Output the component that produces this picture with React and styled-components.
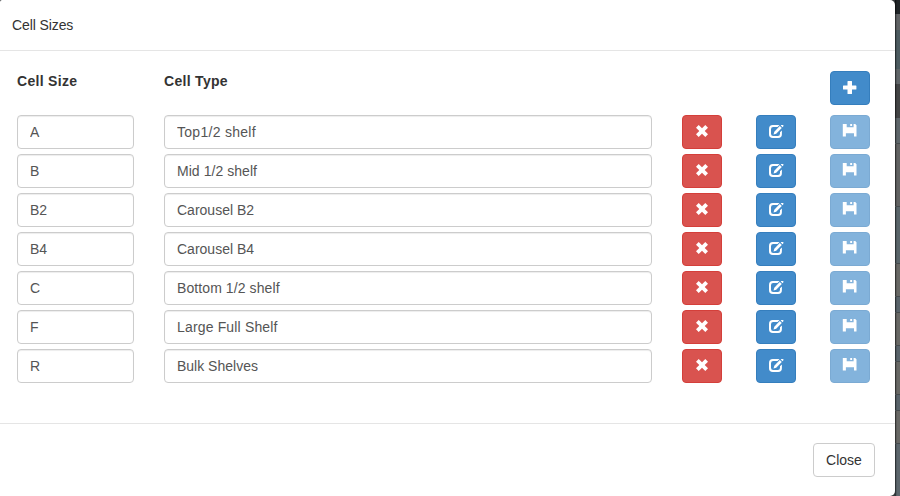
import React from 'react';
import styled, { createGlobalStyle } from 'styled-components';

const GlobalStyle = createGlobalStyle`
  * { box-sizing: border-box; }
  body {
    margin: 0;
    overflow: hidden;
    font: 14px/20px "Liberation Sans", Arial, sans-serif;
    color: #333;
  }
`;

const Page = styled.div`
  display: grid;
  grid-template-columns: 895px 5px;
  height: 496px;
  overflow: hidden;
  background: #34383a;
`;

const Dialog = styled.main`
  display: flex;
  flex-direction: column;
  height: 496px;
  background: #fff;
  border-radius: 2px 5px 5px 0;
`;

const Backdrop = styled.div`
  display: flex;
  flex-direction: column;
`;

const Band = styled.div`
  height: ${(p) => p.$height}px;
  background: linear-gradient(90deg, rgba(0, 0, 0, 0.5) 0 1px, rgba(0, 0, 0, 0.12) 1px 2px, transparent 2px) ${(p) => p.$color};
  border-bottom: ${(p) => (p.$line ? '1px solid #464b4d' : '0')};
`;

const Header = styled.header`
  height: 51px;
  padding: 15px 12px;
  border-bottom: 1px solid #e5e5e5;
  letter-spacing: -0.1px;
`;

const Body = styled.section`
  height: 372px;
  padding: 20px 25px 0 17px;
`;

const Row = styled.div`
  display: grid;
  grid-template-columns: 117px 488px 40px 44px 44px;
  column-gap: 30px;
  height: 34px;
  margin-bottom: 5px;
`;

const HeadRow = styled(Row)`
  margin-bottom: 10px;
`;

const Label = styled.span`
  font-weight: 700;
  letter-spacing: 0.3px;
`;

const Field = styled.input`
  width: 100%;
  height: 34px;
  padding: 6px 12px;
  border: 1px solid #ccc;
  border-radius: 4px;
  background: #fff;
  color: #555;
  font: inherit;
  letter-spacing: ${(p) => p.$tracking || 0}px;
  outline: none;
  box-shadow: inset 0 1px 1px rgba(0, 0, 0, 0.075);
`;

const tones = {
  danger: ['#d9534f', '#d43f3a'],
  primary: ['#428bca', '#357ebd'],
};

const IconButton = styled.button`
  display: flex;
  align-items: flex-start;
  justify-content: center;
  justify-self: end;
  width: 40px;
  height: 34px;
  padding: 8px 0 0;
  color: #fff;
  background: ${(p) => tones[p.$tone][0]};
  border: 1px solid ${(p) => tones[p.$tone][1]};
  border-radius: 4px;
  opacity: ${(p) => (p.disabled ? 0.65 : 1)};
`;

const AddButton = styled(IconButton)`
  grid-column: 5;
`;

const Glyph = styled.svg`
  display: block;
  width: 16px;
  height: 16px;
  fill: currentColor;
`;

const Footer = styled.footer`
  display: flex;
  justify-content: flex-end;
  align-items: flex-start;
  flex: 1;
  padding: 19px 20px;
  border-top: 1px solid #e5e5e5;
`;

const CloseButton = styled.button`
  width: 62px;
  height: 34px;
  padding: 0;
  border: 1px solid #ccc;
  border-radius: 4px;
  background: #fff;
  color: #333;
  font: inherit;
`;

const PlusIcon = () => (
  <Glyph viewBox="0 0 16 16">
    <path d="M6 1h3.500q.5 0 .5.500V5.500h3.900q.5 0 .5.500v3q0 .5-.5.500H10v4q0 .5-.5.500H6q-.5 0-.5-.5v-4H1.500Q1 9.500 1 9V6q0-.5.5-.5h4v-4Q5.500 1 6 1Z" />
  </Glyph>
);

const RemoveIcon = () => (
  <Glyph viewBox="0 0 16 16">
    <path d="M4.700 1 8 4.300 11.300 1 14 3.700 10.700 7 14 10.300 11.300 13 8 9.700 4.700 13 2 10.300 5.300 7 2 3.700Z" />
  </Glyph>
);

const EditIcon = () => (
  <Glyph viewBox="0 0 16 16">
    <path d="M4.800 1H11.500L9.600 3H5.200Q3 3 3 5.200v4.600Q3 12 5.200 12h4.600Q12 12 12 9.800V8.300l1.900-1.900v3.800Q13.900 14 10.100 14H4.900Q1 14 1 10.200V4.900Q1 1 4.800 1Z" />
    <path d="M11.800 2.100 13.800 4.100 8.200 9.700 5.500 10.600 6.300 7.700ZM12.700 1.200 13.100 1h2.300v1.300L14.500 3.300Z" />
  </Glyph>
);

const SaveIcon = () => (
  <Glyph viewBox="0 0 16 16">
    <path d="M.8 0h3.900v3.200h6.900V0h1.600l1.300 1.300v11.300h-2.500V9.200H3.900v3.400H.8ZM8.200 0h1.900v2.100H8.200Z" />
  </Glyph>
);

const cells = [
  ['A', 'Top1/2 shelf', 0.28],
  ['B', 'Mid 1/2 shelf', 0.05],
  ['B2', 'Carousel B2'],
  ['B4', 'Carousel B4'],
  ['C', 'Bottom 1/2 shelf', 0.09],
  ['F', 'Large Full Shelf', 0.16],
  ['R', 'Bulk Shelves'],
];

const bands = [
  [14, '#202427'],
  [16, '#606264'],
  [39, '#4c5b60'],
  [15, '#606568'],
  [34, '#434445'],
  [26, '#5e666a', true],
  [63, '#616262', true],
  [57, '#5a656a', true],
  [33, '#686865', true],
  [16, '#59636a', true],
  [33, '#686865', true],
  [16, '#59636a', true],
  [33, '#686865', true],
  [16, '#59636a', true],
  [33, '#686865', true],
  [52, '#5c666c'],
];

const CellRow = ({ size, type, tracking }) => (
  <Row>
    <Field defaultValue={size} aria-label="Cell Size" />
    <Field defaultValue={type} $tracking={tracking} aria-label="Cell Type" />
    <IconButton $tone="danger" aria-label="Remove"><RemoveIcon /></IconButton>
    <IconButton $tone="primary" aria-label="Edit"><EditIcon /></IconButton>
    <IconButton $tone="primary" aria-label="Save" disabled><SaveIcon /></IconButton>
  </Row>
);

export default function App() {
  return (
    <Page>
      <GlobalStyle />
      <Dialog>
        <Header>Cell Sizes</Header>
        <Body>
          <HeadRow>
            <Label>Cell Size</Label>
            <Label>Cell Type</Label>
            <AddButton $tone="primary" aria-label="Add"><PlusIcon /></AddButton>
          </HeadRow>
          {cells.map(([size, type, tracking]) => (
            <CellRow key={size} size={size} type={type} tracking={tracking} />
          ))}
        </Body>
        <Footer><CloseButton>Close</CloseButton></Footer>
      </Dialog>
      <Backdrop>
        {bands.map(([height, color, line], i) => (
          <Band key={i} $height={height} $color={color} $line={line} />
        ))}
      </Backdrop>
    </Page>
  );
}
